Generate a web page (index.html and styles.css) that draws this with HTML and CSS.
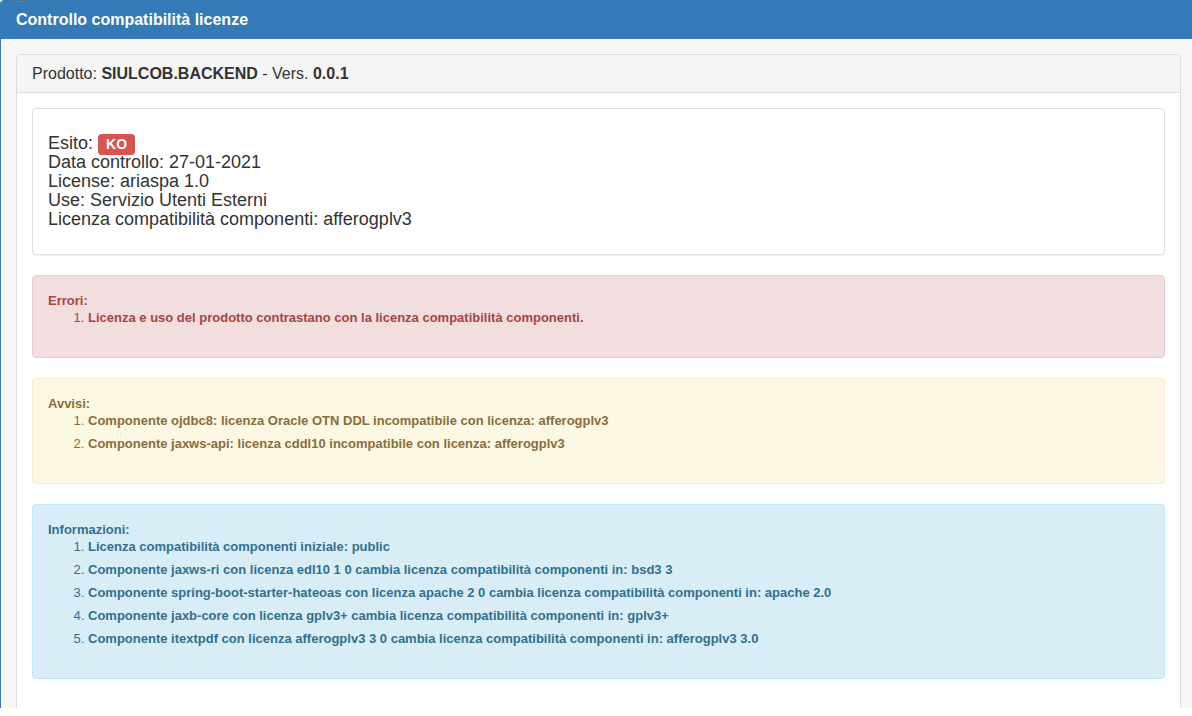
FILE: index.html
```html
<!DOCTYPE html>
<html lang="it">
<head>
<meta charset="utf-8">
<title>Controllo compatibilità licenze</title>
<link rel="stylesheet" href="styles.css">
</head>
<body>
<div class="modal">
  <span class="peek"></span>
  <div class="modal-header">Controllo compatibilità licenze</div>
  <div class="modal-body">
    <div class="panel">
      <div class="panel-heading">Prodotto: <b>SIULCOB.BACKEND</b> - Vers. <b>0.0.1</b></div>
      <div class="panel-body">
        <div class="well">
          <div class="line">Esito: <span class="label">KO</span></div>
          <div class="line">Data controllo: 27-01-2021</div>
          <div class="line">License: ariaspa 1.0</div>
          <div class="line">Use: Servizio Utenti Esterni</div>
          <div class="line">Licenza compatibilità componenti: afferogplv3</div>
        </div>
        <div class="alert alert-danger">
          <div class="alert-title">Errori:</div>
          <ol>
            <li><b>Licenza e uso del prodotto contrastano con la licenza compatibilità componenti.</b></li>
          </ol>
        </div>
        <div class="alert alert-warning">
          <div class="alert-title">Avvisi:</div>
          <ol>
            <li><b>Componente ojdbc8: licenza Oracle OTN DDL incompatibile con licenza: afferogplv3</b></li>
            <li><b>Componente jaxws-api: licenza cddl10 incompatibile con licenza: afferogplv3</b></li>
          </ol>
        </div>
        <div class="alert alert-info">
          <div class="alert-title">Informazioni:</div>
          <ol>
            <li><b>Licenza compatibilità componenti iniziale: public</b></li>
            <li><b>Componente jaxws-ri con licenza edl10 1 0 cambia licenza compatibilità componenti in: bsd3 3</b></li>
            <li><b>Componente spring-boot-starter-hateoas con licenza apache 2 0 cambia licenza compatibilità componenti in: apache 2.0</b></li>
            <li><b>Componente jaxb-core con licenza gplv3+ cambia licenza compatibilità componenti in: gplv3+</b></li>
            <li><b>Componente itextpdf con licenza afferogplv3 3 0 cambia licenza compatibilità componenti in: afferogplv3 3.0</b></li>
          </ol>
        </div>
      </div>
    </div>
  </div>
</div>
</body>
</html>
```
FILE: styles.css
```css
html, body {
  margin: 0;
  padding: 0;
  background: #ffffff;
  overflow: hidden;
}
body {
  font-family: "Liberation Sans", Arial, sans-serif;
  color: #333333;
  width: 1192px;
  height: 716px;
}
.modal {
  position: relative;
  width: 1197px;
  height: 708px;
  overflow: hidden;
  background: #f7f6f4;
  border-left: 1px solid #337ab7;
  box-sizing: border-box;
  border-top-left-radius: 4px;
}
.peek {
  position: absolute;
  left: 11px;
  top: 0;
  width: 14px;
  height: 2px;
  border-left: 2px solid #8a5a2b;
  border-right: 3px solid #8a5a2b;
  border-bottom: 1px solid #a0703f;
  box-sizing: border-box;
  z-index: 2;
}
.modal-header {
  position: relative;
  z-index: 1;
  height: 39px;
  box-sizing: border-box;
  margin-left: -1px;
  padding: 0 16px;
  background: #337ab7;
  color: #ffffff;
  font-weight: bold;
  font-size: 16px;
  line-height: 39px;
  border-top-left-radius: 4px;
}
.modal-body {
  padding: 15px 15px 0 15px;
}
.panel {
  width: 1165px;
  box-sizing: border-box;
  background: #ffffff;
  border: 1px solid #dddddd;
  border-radius: 4px;
  height: 700px;
}
.panel-heading {
  background: #f5f5f5;
  border-bottom: 1px solid #dddddd;
  border-radius: 3px 3px 0 0;
  padding: 10px 15px;
  font-size: 16px;
  line-height: 17px;
  height: 17px;
}
.panel-body {
  padding: 15px;
}
.well {
  border: 1px solid #dddddd;
  border-radius: 4px;
  box-shadow: 0 1px 1px rgba(0, 0, 0, 0.05);
  padding: 25px 15px;
  font-size: 18px;
  line-height: 19px;
  margin-bottom: 20px;
}
.line {
  height: 19px;
}
.label {
  background: #d9534f;
  color: #ffffff;
  font-weight: bold;
  font-size: 14px;
  line-height: 14px;
  padding: 2px 8px 3px;
  border-radius: 4px;
}
.alert {
  border: 1px solid transparent;
  border-radius: 4px;
  padding: 16px 15px 15px;
  margin-bottom: 20px;
  font-size: 13px;
}
.alert-title {
  font-weight: bold;
  line-height: 17px;
}
.alert ol {
  margin: 0;
  padding: 0 0 10px 40px;
}
.alert li {
  line-height: 18px;
  margin-bottom: 5px;
}
.alert-danger {
  background: #f2dede;
  border-color: #ebccd1;
  color: #a94442;
}
.alert-warning {
  background: #fcf8e3;
  border-color: #faebcc;
  color: #8a6d3b;
}
.alert-info {
  background: #d9edf7;
  border-color: #bce8f1;
  color: #31708f;
}
```
